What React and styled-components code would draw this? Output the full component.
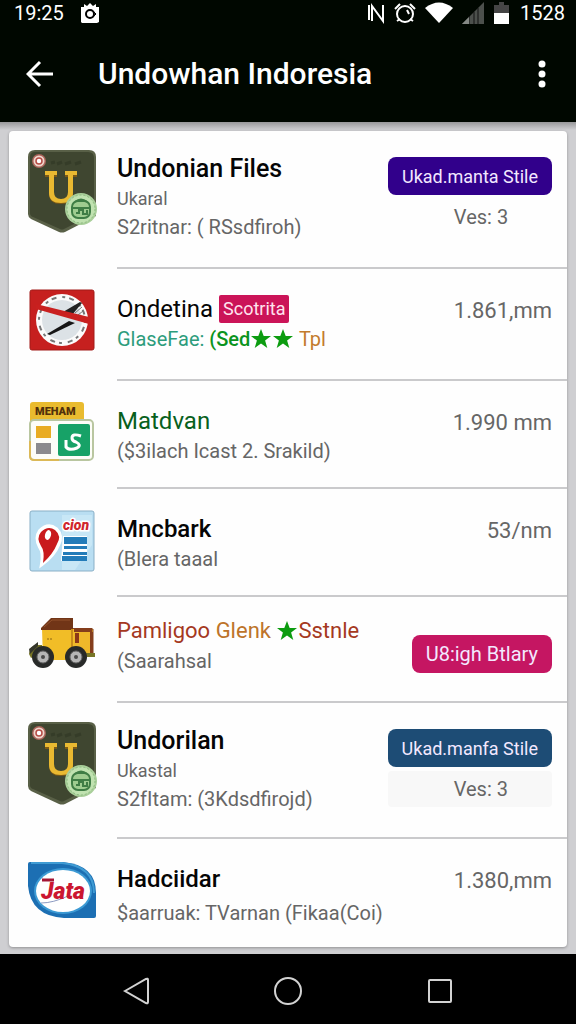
import React from "react";
import styled, { createGlobalStyle } from "styled-components";

const GlobalStyle = createGlobalStyle`
  * {
    box-sizing: border-box;
  }

  body {
    margin: 0;
    font-family: Roboto, "Liberation Sans", sans-serif;
    background: #000;
  }
`;

const Page = styled.div`
  min-height: 100vh;
  display: flex;
  flex-direction: column;
`;

const StatusBar = styled.div`
  display: flex;
  align-items: center;
  gap: 16px;
  height: 26px;
  padding: 0 11px 0 14px;
  background: #000700;
  color: #fff;
  font-size: 20px;
  line-height: 24px;
`;

const StatusIcons = styled.div`
  display: flex;
  align-items: center;
  gap: 9px;
  margin-left: auto;
`;

const AppBar = styled.header`
  display: flex;
  align-items: center;
  height: 96px;
  padding: 0 20px 0 26px;
  background: #000700;
`;

const BarButton = styled.button`
  display: flex;
  padding: 0;
  border: none;
  background: transparent;
`;

const Heading = styled.h1`
  flex: 1;
  margin: 0 0 0 44px;
  color: #fff;
  font-size: 30px;
  font-weight: 500;
  line-height: 36px;
`;

const Main = styled.main`
  flex: 1;
  padding: 9px 9px 7px;
  background: linear-gradient(#98989a, #cfcfd2 8px, #cfcfd2);
`;

const Card = styled.ul`
  margin: 0;
  padding: 0;
  list-style: none;
  background: #fefefe;
  border-radius: 4px;
  box-shadow: 0 1px 3px rgb(0 0 0 / 0.3);
`;

const Row = styled.li`
  display: flex;
`;

const IconCell = styled.div`
  width: 108px;
  padding: 18px 0 0 18px;

  svg {
    display: block;
  }
`;

const Body = styled.div`
  flex: 1;
  display: flex;
  justify-content: space-between;
  padding: ${(props) => props.$top}px 15px ${(props) => props.$bottom - 2}px 0;
  border-bottom: 2px solid #cacacc;

  ${Row}:last-child & {
    border-color: transparent;
  }
`;

const Info = styled.div`
  white-space: nowrap;
`;

const Title = styled.h2`
  display: flex;
  align-items: center;
  margin: 0;
  color: #050505;
  font-size: ${(props) => props.$size || 24}px;
  font-weight: ${(props) => (props.$bold ? 500 : 400)};
  line-height: 32px;
  white-space: pre;
`;

const Tag = styled.span`
  margin-left: 6px;
  padding: 0 4px;
  border-radius: 2px;
  background: #cb1458;
  color: #ffe3ee;
  font-size: 18px;
  line-height: 28px;
`;

const Small = styled.div`
  color: #666;
  font-size: 18px;
  line-height: 28px;
`;

const Sub = styled.div`
  display: flex;
  align-items: center;
  margin-top: ${(props) => (props.$spaced ? 4 : 0)}px;
  color: #666;
  font-size: 20px;
  line-height: 28px;
  white-space: pre;
`;

const Tint = styled.span`
  color: ${(props) => props.$color};
  font-weight: ${(props) => (props.$bold ? 500 : 400)};
`;

const StarSvg = styled.svg`
  width: 22px;
  height: 22px;
`;

const Side = styled.div`
  display: flex;
  flex-direction: column;
  align-items: stretch;
  gap: 4px;
  padding-top: ${(props) => (props.$low ? 20 : 4)}px;
`;

const Price = styled.div`
  color: #666;
  font-size: 22px;
  line-height: 28px;
  text-align: right;
`;

const Action = styled.button`
  height: 38px;
  padding: 0 14px;
  border: none;
  border-radius: 8px;
  background: ${(props) => props.$color};
  color: #f3e8ff;
  font-family: inherit;
  font-size: ${(props) => (props.$large ? 20 : 18)}px;
  white-space: nowrap;
`;

const Version = styled.div`
  padding: 4px 0 4px 22px;
  border-radius: 4px;
  background: ${(props) => (props.$boxed ? "#f8f8f8" : "transparent")};
  color: #666;
  font-size: 20px;
  line-height: 28px;
  text-align: center;
`;

const NavBar = styled.nav`
  display: flex;
  align-items: center;
  justify-content: center;
  gap: 104px;
  height: 70px;
  padding-top: 4px;
  background: #000;
`;

const NavButton = styled.button`
  display: flex;
  justify-content: center;
  width: 48px;
  padding: 0;
  border: none;
  background: transparent;

  svg {
    fill: none;
    stroke: #d2d2d2;
    stroke-width: 2;
  }
`;

const Star = () => (
  <StarSvg viewBox="0 0 22 22">
    <path fill="#0c9c10" d="M11 1l2.700 7H21l-5.900 4.600L17.300 20 11 15.600 4.700 20l2.200-7.400L1 8h7.300z" />
  </StarSvg>
);

const ShieldIcon = () => (
  <svg width="70" height="86" viewBox="0 0 70 86" aria-hidden="true">
    <path d="M8 1h54q7 0 7 7v59L38 83q-3 1-6 0L4 70q-3-2-3-5V8q0-7 7-7z" fill="#596047" />
    <path d="M8 3h53q6 0 6 6v56L37 80q-2 1-4 0L6 68q-3-1-3-4V8q0-5 5-5z" fill="#3f4630" />
    <path d="M24 14l4-1m2 2l5-2m3 2l6-2m4 2l6-2" stroke="#353c28" strokeWidth="3" fill="none" />
    <circle cx="12" cy="12" r="7" fill="#a9645a" />
    <circle cx="12" cy="12" r="5.500" fill="#f0d6cc" />
    <circle cx="12" cy="12" r="3" fill="#fff" stroke="#b64c45" strokeWidth="1.500" />
    <path d="M18 23h12v5h-3v16q0 7 7 7t7-7V28h-3v-5h12v5h-4v17q0 10-12 10T22 45V28h-4z" fill="#7c5a16" />
    <path d="M18 22h12v4h-3v17q0 7 7 7t7-7V26h-3v-4h12v4h-4v18q0 10-12 10T22 44V26h-4z" fill="#e9b931" />
    <circle cx="54" cy="60" r="16" fill="#a9cf9a" />
    <circle cx="54" cy="60" r="14" fill="#c0e2b0" stroke="#8db980" strokeDasharray="2 2" />
    <rect x="45" y="52" width="18" height="17" rx="6" fill="#9fcc90" stroke="#3f7d45" strokeWidth="2" />
    <path d="M48 53q6-5 12 0M44 59h20M49 64h3v-3h4v4h4v-4" fill="none" stroke="#3f7d45" strokeWidth="2" />
  </svg>
);

const DialIcon = () => (
  <svg width="70" height="66" viewBox="0 0 70 66" aria-hidden="true">
    <rect x="3" y="3" width="64" height="60" rx="2" fill="#c6201f" stroke="#a21a18" />
    <circle cx="35" cy="33" r="26" fill="#fbfbfb" />
    <circle cx="35" cy="33" r="23" fill="none" stroke="#777" strokeWidth="2" strokeDasharray="3 4 5 6" />
    <circle cx="35" cy="33" r="20" fill="#dce2e6" />
    <path d="M20 47L42 34l6 2-25 12z" fill="#161616" />
    <path d="M36 25L53 15l2 1-10 12z" fill="#222" />
    <path d="M48 26l7-6m-4 8l5-4" stroke="#777" />
    <path d="M9 17l53 13v7L9 22z" fill="#c9201f" />
  </svg>
);

const SheetIcon = () => (
  <svg width="70" height="66" viewBox="0 0 70 66" aria-hidden="true">
    <path d="M3 22V6q0-3 3-3h48q3 0 3 3v18H3z" fill="#e9bb2f" />
    <rect x="3" y="21" width="63" height="40" rx="4" fill="#fdfdf8" stroke="#b9c6a0" strokeWidth="2" />
    <path d="M3 42v15q0 4 4 4h25" fill="none" stroke="#dcb957" strokeWidth="2" />
    <text x="8" y="16" fontSize="11" fontWeight="900" fill="#51300b">MEHAM</text>
    <rect x="9" y="27" width="15" height="12" fill="#e9ac22" />
    <rect x="9" y="44" width="15" height="11" fill="#8b8a8d" />
    <rect x="31" y="25" width="32" height="32" rx="2" fill="#17a267" />
    <path d="M54 37q-9-3-9 2 0 3 4 4 6 3 1 6-8 3-11-1v-7" fill="none" stroke="#fff" strokeWidth="3" />
  </svg>
);

const PinIcon = () => (
  <svg width="70" height="66" viewBox="0 0 70 66" aria-hidden="true">
    <rect x="3" y="4" width="64" height="60" rx="2" fill="#b9def2" stroke="#89afc6" />
    <path d="M35 8h30v30L48 63H35z" fill="#c8e7f6" />
    <path d="M15 57q2-12-2-17-5-9 0-16 8-8 16-2 7 7 2 16-4 10-16 19z" fill="#fff" stroke="#fff" strokeWidth="4" />
    <path d="M16 56q2-12-2-17-5-8 0-14 7-7 14-2 7 6 2 14-4 10-14 19z" fill="#c91a1d" />
    <ellipse cx="21" cy="28" rx="3" ry="5" fill="#fff" transform="rotate(15 21 28)" />
    <text x="36" y="23" fontSize="14" fontWeight="900" fontStyle="italic" fill="#d0252c" stroke="#fff" strokeWidth="3" paintOrder="stroke">cion</text>
    <path d="M36 29h24v25H34z" fill="#fff" />
    <path d="M37 30h23v7H37zM37 39h23v3H37zM36 45h24v3H36zM35 49h25v5H35z" fill="#237cb9" />
  </svg>
);

const TruckIcon = () => (
  <svg width="70" height="66" viewBox="0 0 70 66" aria-hidden="true">
    <path d="M46 14h20v26H46z" fill="#efb82a" stroke="#83401c" />
    <path d="M46 13h19v4H46zM63 17h3v23h-3z" fill="#843d1c" />
    <path d="M48 18h4v10h-4z" fill="#8c3918" />
    <path d="M15 14h32v31H16z" fill="#f1bd27" />
    <path d="M14 13L24 3h22v12H14z" fill="#713517" />
    <path d="M17 12l8-7h18" stroke="#94522c" fill="none" />
    <path d="M45 14v23" stroke="#c88c1b" strokeWidth="2" />
    <path d="M2 39q1-9 8-9h5v7L4 43zM59 38h9v4h-8z" fill="#777526" />
    <path d="M2 34l9-7v4l-8 8z" fill="#35362b" />
    <circle cx="16" cy="42" r="11" fill="#282a29" />
    <circle cx="49" cy="42" r="11" fill="#282a29" />
    <circle cx="16" cy="42" r="6" fill="#b6b6b6" stroke="#656565" />
    <circle cx="49" cy="42" r="6" fill="#b6b6b6" stroke="#656565" />
    <circle cx="16" cy="42" r="2" fill="#4b4b4b" />
    <circle cx="49" cy="42" r="2" fill="#4b4b4b" />
    <path d="M20 24h5" stroke="#8c6515" strokeDasharray="2 1" />
  </svg>
);

const LogoIcon = () => (
  <svg width="70" height="66" viewBox="0 0 70 66" aria-hidden="true">
    <path d="M3 5h33q33 3 33 31v23q0 2-2 2H37Q4 59 1 29V7q0-2 2-2z" fill="#1c6fb3" />
    <path d="M4 6h31q32 3 32 30" fill="none" stroke="#3f9bd3" strokeWidth="2" />
    <ellipse cx="36" cy="34" rx="29" ry="23" fill="#3c9ad4" />
    <ellipse cx="36" cy="34" rx="27" ry="21" fill="#fff" />
    <path d="M14 46q12 0 27-7" fill="none" stroke="#8c9bc2" />
    <text x="14" y="42" fontSize="23" fontWeight="900" fontStyle="italic" fill="#cb1631">Jata</text>
    <path d="M15 23h12" stroke="#a51635" strokeWidth="3" />
  </svg>
);

const apps = [
  {
    Icon: ShieldIcon, top: 22, bottom: 28,
    title: "Undonian Files", bold: true, size: 25,
    small: "Ukaral", sub: "S2ritnar: ( RSsdfiroh)",
    button: "Ukad.manta Stile", color: "#31008b", version: "Ves: 3",
  },
  {
    Icon: DialIcon, top: 24, bottom: 28,
    title: "Ondetina", tag: "Scotrita",
    sub: (
      <>
        <Tint $color="#2d9c7c">GlaseFae: </Tint>
        <Tint $color="#0b9420" $bold>(Sed</Tint>
        <Star /><Star />
        <Tint $color="#c37b2c"> Tpl</Tint>
      </>
    ),
    price: "1.861,mm",
  },
  {
    Icon: SheetIcon, top: 24, bottom: 24,
    title: <Tint $color="#08601c">Matdvan</Tint>,
    sub: "($3ilach Icast 2. Srakild)",
    price: "1.990 mm",
  },
  {
    Icon: PinIcon, top: 24, bottom: 24,
    title: "Mncbark", bold: true,
    sub: "(Blera taaal",
    price: "53/nm",
  },
  {
    Icon: TruckIcon, top: 18, bottom: 28, size: 22,
    title: (
      <>
        <Tint $color="#a5391f">Pamligoo </Tint>
        <Tint $color="#bd742a">Glenk </Tint>
        <Star />
        <Tint $color="#a5391f">Sstnle</Tint>
      </>
    ),
    sub: "(Saarahsal",
    button: "U8:igh Btlary", color: "#c51662", low: true,
  },
  {
    Icon: ShieldIcon, top: 22, bottom: 26,
    title: "Undorilan", bold: true, size: 25,
    small: "Ukastal", sub: "S2fItam: (3Kdsdfirojd)",
    button: "Ukad.manfa Stile", color: "#1d4c75", version: "Ves: 3", boxed: true,
  },
  {
    Icon: LogoIcon, top: 24, bottom: 20,
    title: "Hadciidar", bold: true, spaced: true,
    sub: "$aarruak: TVarnan (Fikaa(Coi)",
    price: "1.380,mm",
  },
];

const AppRow = ({ app }) => {
  const { Icon } = app;
  return (
    <Row>
      <IconCell><Icon /></IconCell>
      <Body $top={app.top} $bottom={app.bottom}>
        <Info>
          <Title $bold={app.bold} $size={app.size}>
            {app.title}
            {app.tag && <Tag>{app.tag}</Tag>}
          </Title>
          {app.small && <Small>{app.small}</Small>}
          <Sub $spaced={app.spaced}>{app.sub}</Sub>
        </Info>
        <Side $low={app.low}>
          {app.price && <Price>{app.price}</Price>}
          {app.button && <Action type="button" $color={app.color} $large={app.low}>{app.button}</Action>}
          {app.version && <Version $boxed={app.boxed}>{app.version}</Version>}
        </Side>
      </Body>
    </Row>
  );
};

const App = () => {
  return (
    <Page>
      <GlobalStyle />
      <StatusBar>
        <span>19:25</span>
        <svg width="20" height="20" viewBox="0 0 20 20">
          <path d="M1 4h3V1l3 2 3-3 3 3 3-2v3h3v15l-2 1H2l-1-1z" fill="#fff" />
          <circle cx="10" cy="11" r="4" fill="none" stroke="#000" strokeWidth="2" />
          <path d="M14 9l2 2-2 2" fill="none" stroke="#000" />
        </svg>
        <StatusIcons>
          <svg width="18" height="22" viewBox="0 0 18 22">
            <path d="M2 18V3M5 19V4l11 15V3" fill="none" stroke="#fff" strokeWidth="2" />
          </svg>
          <svg width="22" height="22" viewBox="0 0 22 22">
            <circle cx="11" cy="12" r="8" fill="none" stroke="#fff" strokeWidth="2" />
            <path d="M1 7l5-5M16 2l5 5M3 19l3-2M19 19l-3-2M13 8l2 4" stroke="#fff" strokeWidth="2" />
          </svg>
          <svg width="28" height="22" viewBox="0 0 28 22">
            <path d="M0 6q14-11 28 0L14 21z" fill="#fff" />
          </svg>
          <svg width="22" height="22" viewBox="0 0 22 22">
            <path d="M0 22L22 0v22z" fill="#4c504c" />
            <path d="M7 14v8M12 10v12M16 6v16" stroke="#111" />
            <path d="M0 22l7-7v7z" fill="#858985" />
          </svg>
          <svg width="18" height="22" viewBox="0 0 18 22">
            <path d="M1 3h5V0h5v3h5v8H1z" fill="#454545" />
            <path d="M1 11h15v11H1z" fill="#fff" />
          </svg>
          <span>1528</span>
        </StatusIcons>
      </StatusBar>
      <AppBar>
        <BarButton type="button" aria-label="Back">
          <svg width="28" height="28" viewBox="0 0 28 28">
            <path d="M14 2L2 14l12 12M2 14h25" fill="none" stroke="#fff" strokeWidth="3" />
          </svg>
        </BarButton>
        <Heading>Undowhan Indoresia</Heading>
        <BarButton type="button" aria-label="More">
          <svg width="28" height="28" viewBox="0 0 28 28" fill="#fff">
            <circle cx="14" cy="4" r="3.500" />
            <circle cx="14" cy="14" r="3.500" />
            <circle cx="14" cy="24" r="3.500" />
          </svg>
        </BarButton>
      </AppBar>
      <Main>
        <Card>
          {apps.map((app, i) => <AppRow app={app} key={i} />)}
        </Card>
      </Main>
      <NavBar>
        <NavButton type="button" aria-label="Back">
          <svg width="30" height="30" viewBox="0 0 30 30">
            <path d="M4 15L25 3q2-1 2 1v22q0 2-2 1z" />
          </svg>
        </NavButton>
        <NavButton type="button" aria-label="Home">
          <svg width="30" height="30" viewBox="0 0 30 30">
            <circle cx="15" cy="15" r="13" />
          </svg>
        </NavButton>
        <NavButton type="button" aria-label="Recent apps">
          <svg width="30" height="30" viewBox="0 0 30 30">
            <rect x="4" y="4" width="22" height="22" rx="1" />
          </svg>
        </NavButton>
      </NavBar>
    </Page>
  );
};

export default App;
